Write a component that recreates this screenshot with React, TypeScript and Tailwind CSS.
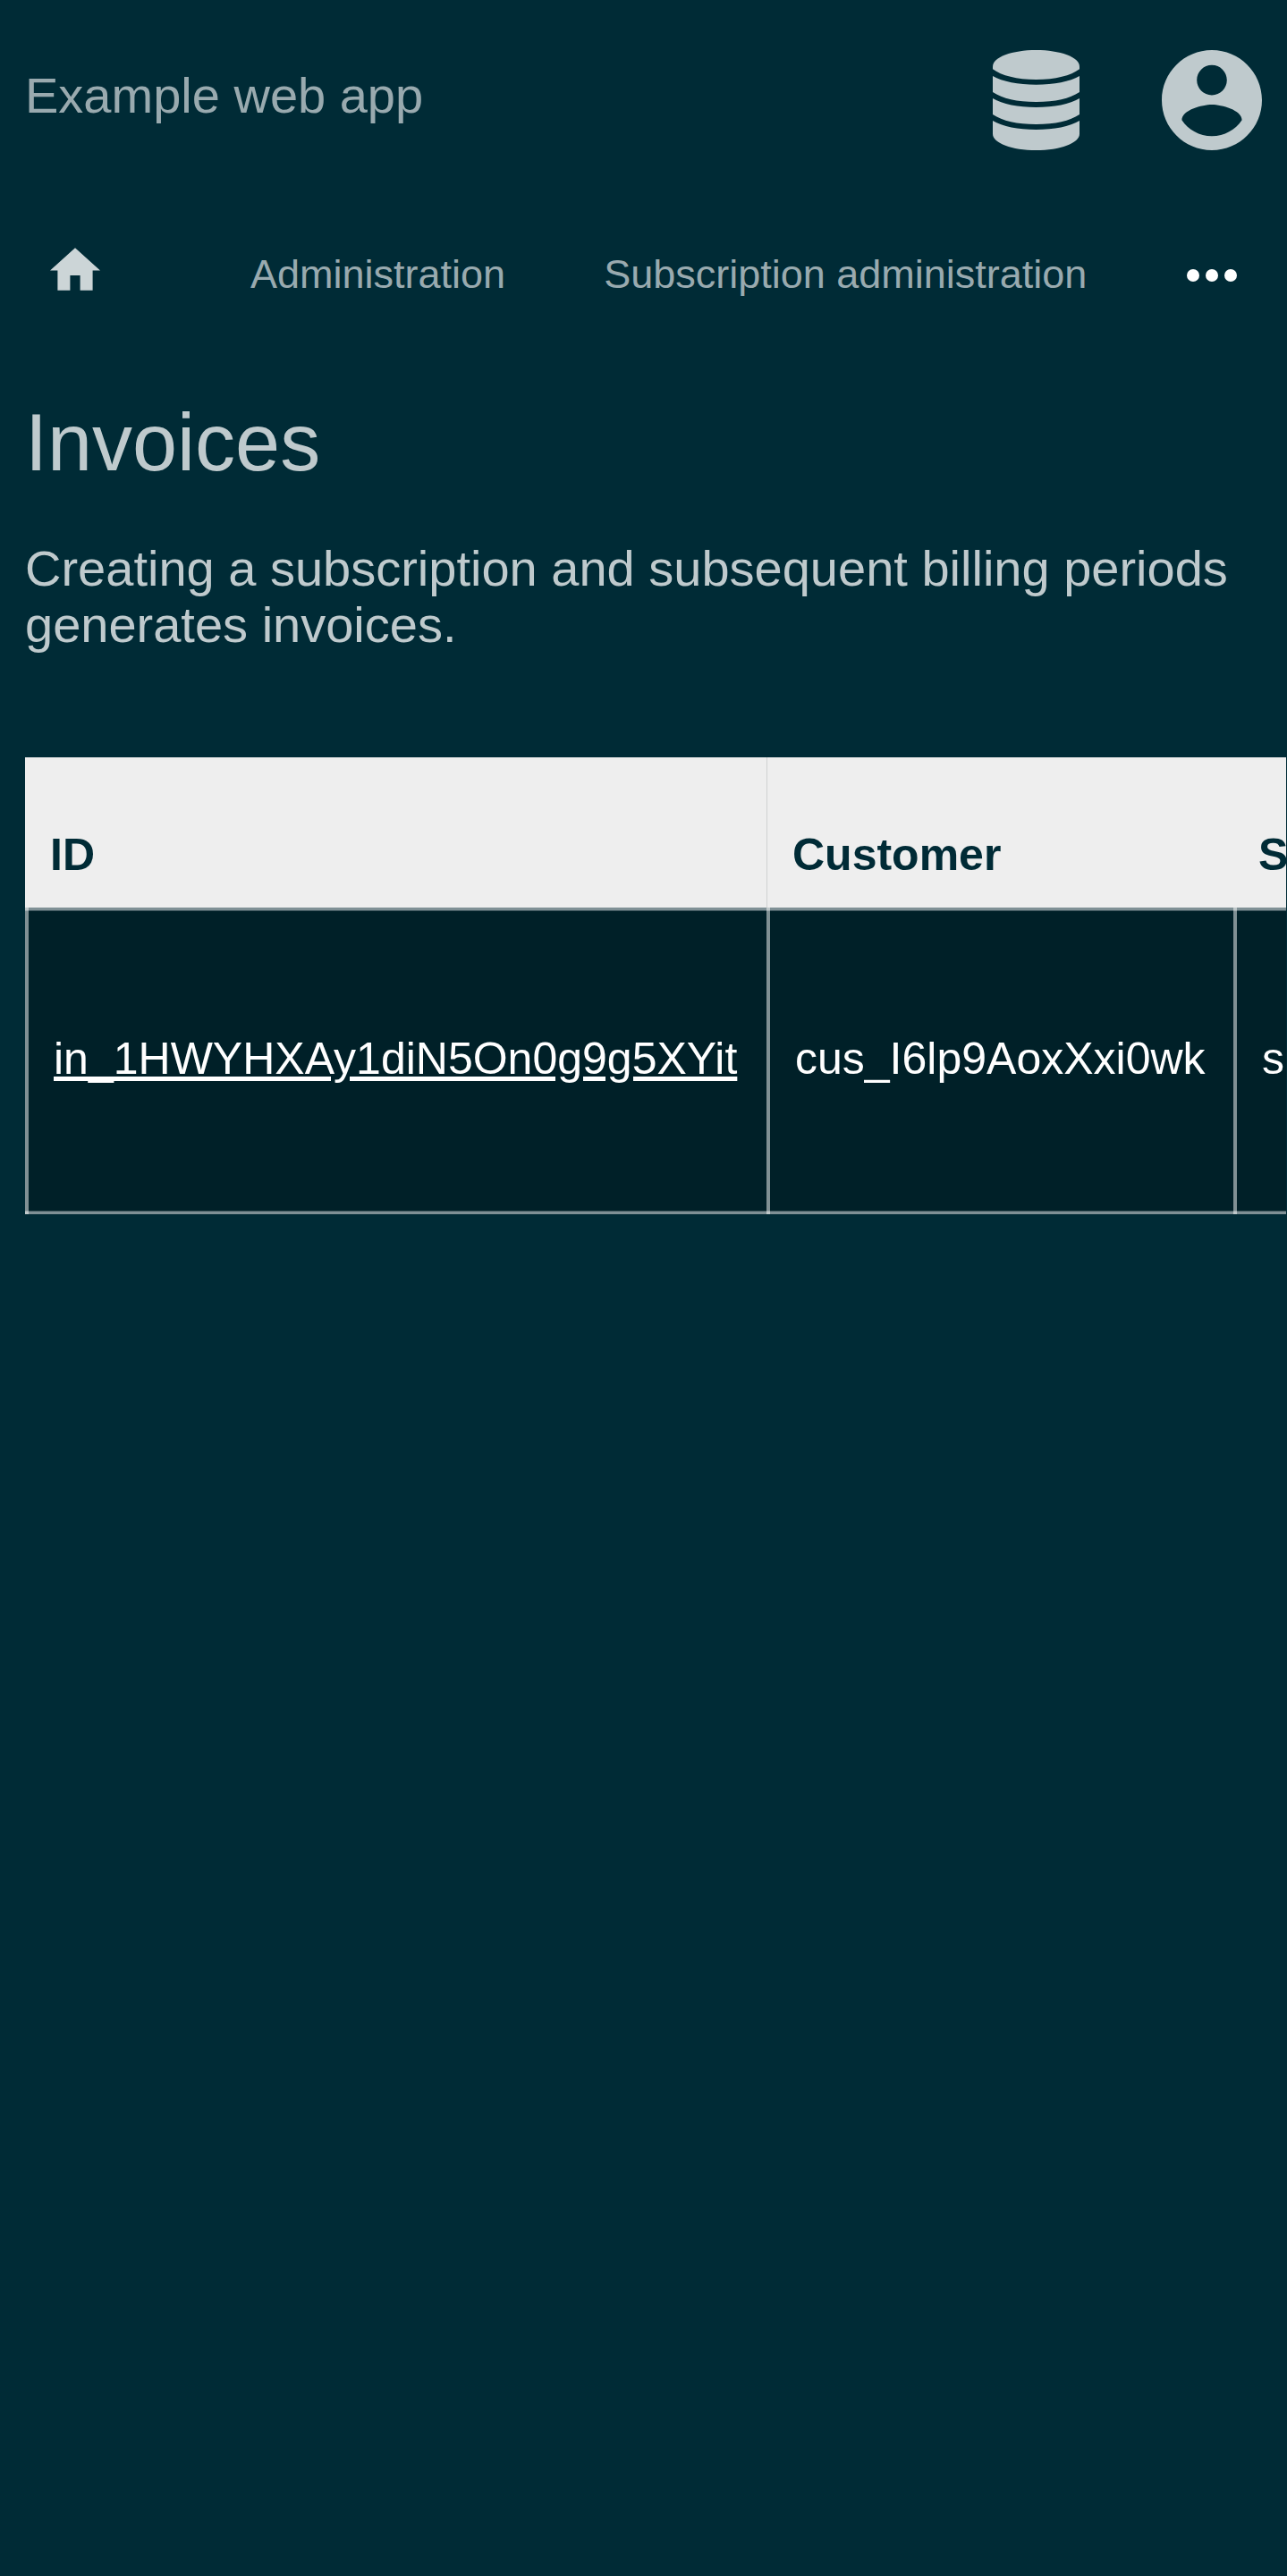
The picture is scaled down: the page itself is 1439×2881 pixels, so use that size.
import React from "react";

const invoices = [
  { id: "in_1HWYHXAy1diN5On0g9g5XYit", customer: "cus_I6lp9AoxXxi0wk", subscription: "sub" },
];

function DatabaseIcon() {
  return (
    <svg viewBox="0 0 291 336" className="h-28 w-[97px]" fill="currentColor" aria-hidden="true">
      <path d="M0 55C0 24 65 0 145.500 0S291 24 291 55V64C262 86 210 99 145.500 99S29 86 0 64Z" />
      <path d="M0 87C33 106 85 116 145.500 116S258 106 291 87V141C258 163 210 174 145.500 174S33 163 0 141Z" />
      <path d="M0 162C33 182 85 192 145.500 192S258 182 291 162V216C258 238 210 249 145.500 249S33 238 0 216Z" />
      <path d="M0 237C33 257 85 267 145.500 267S258 257 291 237V281C291 312 226 336 145.500 336S0 312 0 281Z" />
    </svg>
  );
}

function AccountIcon() {
  return (
    <svg viewBox="2 2 20 20" className="size-28" fill="currentColor" aria-hidden="true">
      <path d="M12 2C6.480 2 2 6.480 2 12s4.480 10 10 10 10-4.480 10-10S17.520 2 12 2zm0 3c1.660 0 3 1.340 3 3s-1.340 3-3 3-3-1.340-3-3 1.340-3 3-3zm0 14.200c-2.500 0-4.710-1.280-6-3.220.03-1.990 4-3.080 6-3.080 1.990 0 5.970 1.090 6 3.080-1.290 1.940-3.500 3.220-6 3.220z" />
    </svg>
  );
}

function HomeIcon() {
  return (
    <svg viewBox="2 3 20 17" className="h-12 w-14" fill="currentColor" aria-hidden="true">
      <path d="M10 20v-6h4v6h5v-8h3L12 3 2 12h3v8z" />
    </svg>
  );
}

function MoreIcon() {
  return (
    <svg viewBox="0 0 56 14" className="h-3.5 w-14" fill="currentColor" aria-hidden="true">
      <circle cx="7" cy="7" r="7" />
      <circle cx="28" cy="7" r="7" />
      <circle cx="49" cy="7" r="7" />
    </svg>
  );
}

const cell =
  "border-l-4 border-white/50 bg-[linear-gradient(#7f9095_3px,#40575e_3px,#40575e_4px,#002028_4px,#002028_calc(100%-4px),#40575e_calc(100%-4px),#40575e_calc(100%-3px),#7f9095_calc(100%-3px))] bg-origin-border px-7 pt-[140px] pb-[145px]";

export default function App() {
  return (
    <div className="min-h-screen overflow-hidden bg-[#002b36] font-['Liberation_Sans',Arial,sans-serif] text-[#bfcacd]">
      <header className="flex items-start justify-between px-7 pt-14">
        <a href="#" className="pt-[19px] text-[56px] leading-[64px] text-[#99aaaf]">
          Example web app
        </a>
        <div className="flex gap-[92px]">
          <button type="button" aria-label="Administration menu">
            <DatabaseIcon />
          </button>
          <button type="button" aria-label="Account menu">
            <AccountIcon />
          </button>
        </div>
      </header>

      <nav className="mt-[109px] flex items-start gap-[110px] px-14 text-[45px] leading-[52px] whitespace-nowrap text-[#99aaaf]">
        <a href="#" aria-label="Home" className="mr-[58px] text-[#ccd5d7]">
          <HomeIcon />
        </a>
        <a href="#" className="pt-1">Administration</a>
        <a href="#" className="pt-1">Subscription administration</a>
        <button type="button" aria-label="More" className="ml-auto pt-6 text-white">
          <MoreIcon />
        </button>
      </nav>

      <main className="pt-[110px] pl-7">
        <h1 className="text-[90px] leading-[104px]">Invoices</h1>
        <p className="mt-[57px] pr-7 text-[56px] leading-[63px]">
          Creating a subscription and subsequent billing periods generates invoices.
        </p>
        <div className="mt-[117px] mr-px overflow-x-auto [scrollbar-width:none]">
          <table className="border-separate border-spacing-0 text-left text-[50px] leading-[58px] whitespace-nowrap">
            <thead className="bg-[#eeeeee] text-[#002b36]">
              <tr>
                <th className="min-w-[829px] px-7 pt-20 pb-[30px]">ID</th>
                <th className="min-w-[522px] border-l border-[#d0d1d2] px-7 pt-20 pb-[30px]">Customer</th>
                <th className="px-7 pt-20 pb-[30px]">Subscription</th>
              </tr>
            </thead>
            <tbody className="text-white">
              {invoices.map((invoice) => (
                <tr key={invoice.id}>
                  <td className={cell}>
                    <a href="#" className="underline">
                      {invoice.id}
                    </a>
                  </td>
                  <td className={cell}>{invoice.customer}</td>
                  <td className={cell}>{invoice.subscription}</td>
                </tr>
              ))}
            </tbody>
          </table>
        </div>
      </main>
    </div>
  );
}
